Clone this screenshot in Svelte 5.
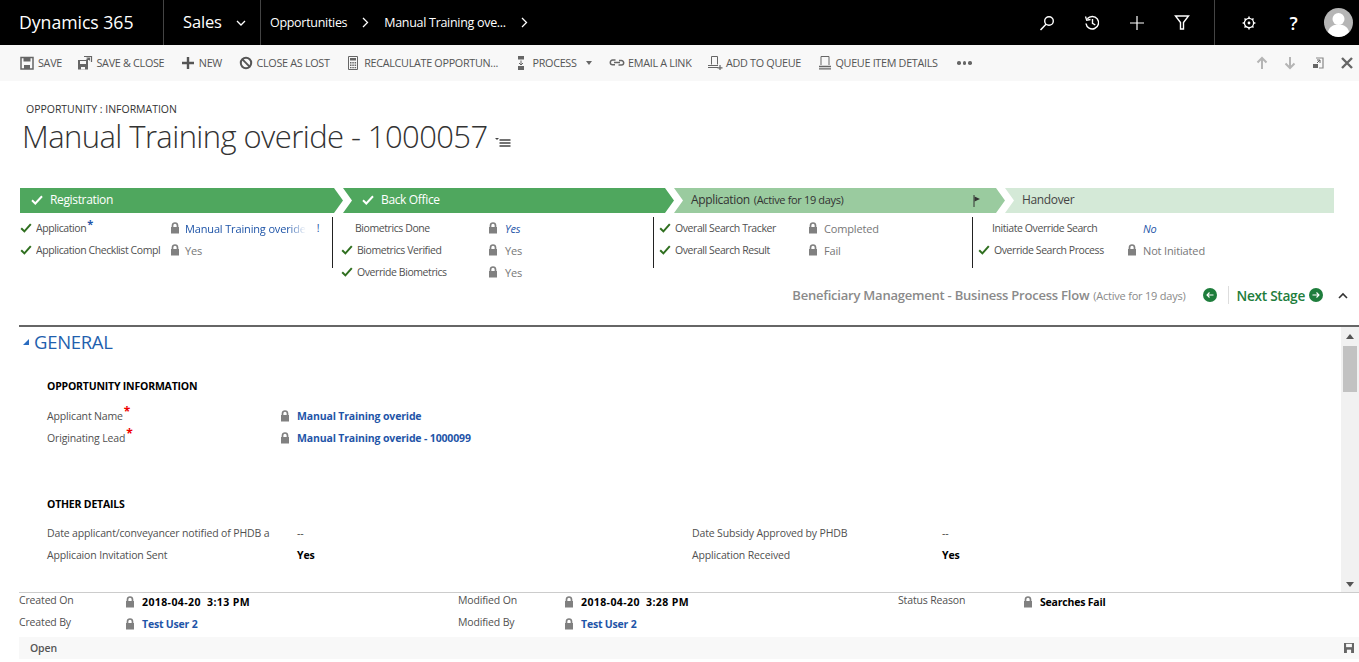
<script>
  const commands = [
    { label: 'SAVE', icon: 'save' },
    { label: 'SAVE & CLOSE', icon: 'saveclose' },
    { label: 'NEW', icon: 'plus' },
    { label: 'CLOSE AS LOST', icon: 'ban' },
    { label: 'RECALCULATE OPPORTUN...', icon: 'calc' },
    { label: 'PROCESS', icon: 'process', caret: true },
    { label: 'EMAIL A LINK', icon: 'link' },
    { label: 'ADD TO QUEUE', icon: 'addqueue' },
    { label: 'QUEUE ITEM DETAILS', icon: 'queue' }
  ];

  const stages = [
    { name: 'Registration', state: 'done' },
    { name: 'Back Office', state: 'done' },
    { name: 'Application', state: 'active', note: '(Active for 19 days)' },
    { name: 'Handover', state: 'todo' }
  ];

  const stageFields = [
    [
      { label: 'Application', req: true, check: true, lock: true, value: 'Manual Training overide', link: true, fade: true },
      { label: 'Application Checklist Compl', check: true, lock: true, value: 'Yes' }
    ],
    [
      { label: 'Biometrics Done', lock: true, value: 'Yes', em: true },
      { label: 'Biometrics Verified', check: true, lock: true, value: 'Yes' },
      { label: 'Override Biometrics', check: true, lock: true, value: 'Yes' }
    ],
    [
      { label: 'Overall Search Tracker', check: true, lock: true, value: 'Completed' },
      { label: 'Overall Search Result', check: true, lock: true, value: 'Fail' }
    ],
    [
      { label: 'Initiate Override Search', value: 'No', em: true },
      { label: 'Override Search Process', check: true, lock: true, value: 'Not Initiated' }
    ]
  ];

  const footer = [
    [
      { label: 'Created On', value: '2018-04-20  3:13 PM', date: true },
      { label: 'Created By', value: 'Test User 2', link: true }
    ],
    [
      { label: 'Modified On', value: '2018-04-20  3:28 PM', date: true },
      { label: 'Modified By', value: 'Test User 2', link: true }
    ],
    [{ label: 'Status Reason', value: 'Searches Fail' }]
  ];
</script>

{#snippet lock()}
  <svg class="lock" viewBox="0 0 10 12" width="10" height="12">
    <path d="M2.500 5.500V3.500C2.500 2 3.500 1 5 1s2.500 1 2.500 2.500v2" fill="none" stroke="#808080" stroke-width="1.700" />
    <rect x="1" y="5" width="8" height="6.500" fill="#808080" />
  </svg>
{/snippet}

{#snippet check()}
  <svg class="check" viewBox="0 0 12 10" width="12" height="10">
    <path d="M1.200 5.200 4.400 8.400 10.800 1.200" fill="none" stroke="#2f6f1f" stroke-width="2" />
  </svg>
{/snippet}

{#snippet cmdIcon(name)}
  <svg class="cmd-icon" viewBox="0 0 16 16" width="16" height="16">
    {#if name === 'save'}
      <path d="M2 2.500h12v11.500H2z" fill="none" stroke="#666" stroke-width="1.500" />
      <path d="M4.500 2.500h7v4h-7zM5 10h6v4H5z" fill="#666" />
    {:else if name === 'saveclose'}
      <path d="M1 5h10v9.500H1z" fill="#666" />
      <path d="M3 6h6v3H3zM4 12h4v2.500H4z" fill="#f8f8f8" />
      <path d="M7 1.500h7.500V7" fill="none" stroke="#666" stroke-width="1.200" />
      <path d="M12.500 3 9 5.500M9.500 3h3v2.500" fill="none" stroke="#666" stroke-width="1.100" />
    {:else if name === 'plus'}
      <path d="M8 2v12M2 8h12" stroke="#555" stroke-width="2.400" />
    {:else if name === 'ban'}
      <circle cx="8" cy="8" r="5.200" fill="none" stroke="#555" stroke-width="2" />
      <path d="M4.400 4.400l7.200 7.200" stroke="#555" stroke-width="2" />
    {:else if name === 'calc'}
      <path d="M3.500 1.500h9v13h-9z" fill="none" stroke="#666" />
      <path d="M5 3h6v2.500H5zM5 7h1.500v1.500H5zM7.300 7h1.500v1.500H7.300zM9.600 7h1.500v1.500H9.600zM5 9.500h1.500V11H5zM7.300 9.500h1.500V11H7.300zM9.600 9.500h1.500V11H9.600zM5 12h1.500v1.300H5zM7.300 12h1.500v1.300H7.300zM9.600 12h1.500v1.300H9.600z" fill="#666" />
    {:else if name === 'process'}
      <path d="M5 1h6v3.500H5zM5 11h6v4H5z" fill="#666" />
      <path d="M8 5.500V10M6 8l2 2 2-2" fill="none" stroke="#666" />
    {:else if name === 'link'}
      <path d="M6.500 5.500H3.600a2.300 2.300 0 0 0 0 4.600h2.400M9.500 10.500h2.900a2.300 2.300 0 0 0 0-4.600H10M5 8h6" transform="translate(0 -.4)" fill="none" stroke="#666" stroke-width="1.500" />
    {:else if name === 'addqueue'}
      <path d="M4.500 9.500V1.500h6v8" fill="none" stroke="#666" />
      <path d="M1 10.500h10M1 12.500h10" stroke="#666" stroke-width="1.200" />
      <path d="M13 10v5M10.500 12.800h5" stroke="#666" stroke-width="1.200" />
    {:else if name === 'queue'}
      <path d="M4 10V1.500h8V10" fill="none" stroke="#666" />
      <path d="M2 11.500h12M2 13.800h12" stroke="#666" stroke-width="1.300" />
    {/if}
  </svg>
{/snippet}

<div class="page">
  <header class="topbar">
    <div class="brand">Dynamics 365</div>
    <div class="app">
      <span>Sales</span>
      <svg viewBox="0 0 10 6" width="10" height="6"><path d="M1 1l4 4 4-4" fill="none" stroke="#fff" stroke-width="1.300" /></svg>
    </div>
    <nav class="crumbs">
      <span class="crumb-first">Opportunities</span>
      <svg viewBox="0 0 7 11" width="7" height="11"><path d="M1 1l4.500 4.500L1 10" fill="none" stroke="#fff" stroke-width="1.300" /></svg>
      <span class="crumb-second">Manual Training ove...</span>
      <svg viewBox="0 0 7 11" width="7" height="11"><path d="M1 1l4.500 4.500L1 10" fill="none" stroke="#fff" stroke-width="1.300" /></svg>
    </nav>
    <div class="tools">
      <button aria-label="Search">
        <svg viewBox="0 0 16 16" width="16" height="16"><circle cx="10" cy="6" r="4.300" fill="none" stroke="#fff" stroke-width="1.400" /><path d="M7 9.300 1.500 15" stroke="#fff" stroke-width="1.500" /></svg>
      </button>
      <button aria-label="Recent">
        <svg viewBox="0 0 16 16" width="16" height="16"><path d="M3.300 3.800A6.300 6.300 0 1 1 2 8.500" fill="none" stroke="#fff" stroke-width="1.500" /><path d="M1.500 1.500 2.700 5.200l3.800-.7" fill="none" stroke="#fff" stroke-width="1.300" /><path d="M8.500 4v4.300l2.800 1.700" fill="none" stroke="#fff" stroke-width="1.400" /></svg>
      </button>
      <button aria-label="Create">
        <svg viewBox="0 0 14 14" width="14" height="14"><path d="M7 0v14M0 7h14" stroke="#fff" stroke-width="1.200" /></svg>
      </button>
      <button aria-label="Filter">
        <svg viewBox="0 0 16 15" width="16" height="15"><path d="M1.500 1h13L9.500 7.500V14h-3V7.500z" fill="none" stroke="#fff" stroke-width="1.400" /></svg>
      </button>
      <span class="tool-sep"></span>
      <button aria-label="Settings">
        <svg viewBox="0 0 14 14" width="14" height="14"><circle cx="7" cy="7" r="4.600" fill="none" stroke="#fff" stroke-width="1.300" /><circle cx="7" cy="7" r="1.400" fill="#fff" /><path d="M7 .6v1.800M7 11.600v1.800M.6 7h1.800M11.600 7h1.800M2.500 2.500l1.300 1.300M10.200 10.200l1.300 1.300M2.500 11.500l1.300-1.300M10.200 3.800l1.300-1.300" stroke="#fff" stroke-width="1.500" /></svg>
      </button>
      <button class="help" aria-label="Help">?</button>
      <div class="avatar">
        <svg viewBox="0 0 29 29" width="29" height="29"><circle cx="14.500" cy="14.500" r="14.500" fill="#b5b5b5" /><circle cx="14.500" cy="11" r="6" fill="#fff" /><path d="M4 24c1-5 5-7.500 10.500-7.500S24 19 25 24a14.500 14.500 0 0 1-10.500 5A14.500 14.500 0 0 1 4 24z" fill="#fff" /></svg>
      </div>
    </div>
  </header>

  <div class="commands">
    <div class="cmd-list">
      {#each commands as c}
        <div class="cmd">
          {@render cmdIcon(c.icon)}
          <span>{c.label}</span>
          {#if c.caret}<i class="caret"></i>{/if}
        </div>
      {/each}
      <div class="more"><b></b><b></b><b></b></div>
    </div>
    <div class="cmd-nav">
      <svg viewBox="0 0 12 14" width="12" height="14"><path d="M6 13V2M1.500 6.500 6 2l4.500 4.500" fill="none" stroke="#b5b5b5" stroke-width="2" /></svg>
      <svg viewBox="0 0 12 14" width="12" height="14"><path d="M6 1v11M1.500 7.500 6 12l4.500-4.500" fill="none" stroke="#b5b5b5" stroke-width="2" /></svg>
      <svg viewBox="0 0 12 12" width="12" height="12"><path d="M4 1h7v10H7" fill="none" stroke="#888" stroke-width="1.200" /><path d="M1 7h5v4H1z" fill="#666" /><path d="M5 6l3-3M5 3h3v3" fill="none" stroke="#666" /></svg>
      <svg class="close" viewBox="0 0 12 12" width="12" height="12"><path d="M1 1l10 10M11 1 1 11" stroke="#666" stroke-width="2.400" /></svg>
    </div>
  </div>

  <section class="title">
    <div class="entity">OPPORTUNITY : INFORMATION</div>
    <h1>
      Manual Training overide - 1000057
      <svg viewBox="0 0 16 10" width="16" height="10"><path d="M4.500 3h11M4.500 6h11M4.500 9h11" stroke="#444" stroke-width="1.300" /><path d="M0 1h4L2 3z" fill="#444" /></svg>
    </h1>
  </section>

  <div class="stages">
    {#each stages as s}
      <div class="stage {s.state}">
        {#if s.state === 'done'}
          <svg viewBox="0 0 12 10" width="12" height="10"><path d="M1 5.200 4.300 8.500 11 1.200" fill="none" stroke="#fff" stroke-width="2" /></svg>
        {/if}
        <span class="stage-name">{s.name}</span>
        {#if s.note}<span class="stage-note">{s.note}</span>{/if}
        {#if s.state === 'active'}
          <svg class="flag" viewBox="0 0 8 12" width="8" height="12"><path d="M1 0v12" stroke="#333" /><path d="M1.500 1.500 7 4 1.500 6.500z" fill="#333" /></svg>
        {/if}
      </div>
    {/each}
  </div>

  <div class="stage-fields">
    {#each stageFields as col, i}
      <div class="sf-col sf-col-{i}">
        {#each col as f}
          <div class="sf-row" class:nocheck={!f.check}>
            <span class="sf-check">{#if f.check}{@render check()}{/if}</span>
            <span class="sf-label">{f.label}{#if f.req}<sup class="req-blue">*</sup>{/if}</span>
            <span class="sf-lock">{#if f.lock}{@render lock()}{/if}</span>
            <span class="sf-value" class:link={f.link} class:em={f.em} class:fade={f.fade}>{f.value}</span>
            {#if f.fade}<span class="bang">!</span>{/if}
          </div>
        {/each}
      </div>
    {/each}
  </div>

  <div class="bpf">
    <span class="bpf-name">Beneficiary Management - Business Process Flow</span>
    <span class="bpf-note">(Active for 19 days)</span>
    <svg class="round" viewBox="0 0 14 14" width="14" height="14"><circle cx="7" cy="7" r="7" fill="#1e7d3c" /><path d="M10.500 7H4M6.500 4.500 4 7l2.500 2.500" fill="none" stroke="#fff" stroke-width="1.100" /></svg>
    <span class="bpf-sep"></span>
    <span class="next">Next Stage</span>
    <svg class="round" viewBox="0 0 14 14" width="14" height="14"><circle cx="7" cy="7" r="7" fill="#1e7d3c" /><path d="M3.500 7H10M7.500 4.500 10 7 7.500 9.500" fill="none" stroke="#fff" stroke-width="1.100" /></svg>
    <svg class="collapse" viewBox="0 0 10 7" width="10" height="7"><path d="M1 6l4-4 4 4" fill="none" stroke="#333" stroke-width="1.600" /></svg>
  </div>

  <main class="form">
    <div class="form-body">
      <div class="tab-head">
        <i class="tab-tri"></i>
        <h2>GENERAL</h2>
      </div>

      <h3 class="sec-info">OPPORTUNITY INFORMATION</h3>
      <div class="row">
        <span class="lbl">Applicant Name<sup class="req">*</sup></span>
        {@render lock()}
        <span class="val link">Manual Training overide</span>
      </div>
      <div class="row">
        <span class="lbl">Originating Lead<sup class="req">*</sup></span>
        {@render lock()}
        <span class="val link">Manual Training overide - 1000099</span>
      </div>

      <h3 class="sec-other">OTHER DETAILS</h3>
      <div class="two">
        <div class="pair">
          <span class="lbl clip">Date applicant/conveyancer notified of PHDB a</span>
          <span class="val plain">--</span>
        </div>
        <div class="pair">
          <span class="lbl">Date Subsidy Approved by PHDB</span>
          <span class="val plain">--</span>
        </div>
        <div class="pair">
          <span class="lbl">Applicaion Invitation Sent</span>
          <span class="val">Yes</span>
        </div>
        <div class="pair">
          <span class="lbl">Application Received</span>
          <span class="val">Yes</span>
        </div>
      </div>
    </div>
    <div class="scrollbar">
      <i class="up"></i>
      <div class="track"><div class="thumb"></div></div>
      <i class="down"></i>
    </div>
  </main>

  <footer class="summary">
    {#each footer as col, i}
      <div class="sum-col sum-col-{i}">
        {#each col as f}
          <div class="sum-row">
            <span class="sum-label">{f.label}</span>
            {@render lock()}
            <span class="sum-value" class:link={f.link} class:date={f.date}>{f.value}</span>
          </div>
        {/each}
      </div>
    {/each}
  </footer>

  <div class="status">
    <span>Open</span>
    <svg viewBox="0 0 12 12" width="10" height="10"><path d="M0 0h12v12H0z" fill="#666" /><path d="M2.500 1h7v4h-7z" fill="#f8f8f8" /><path d="M3.500 8h5v4h-5z" fill="#f8f8f8" /></svg>
  </div>
</div>

<style>
  :global(body) {
    margin: 0;
    background: #fff;
    font-family: "Open Sans", "Liberation Sans", sans-serif;
    overflow: hidden;
  }

  .page {
    width: 1359px;
    height: 662px;
    overflow: hidden;
    color: #444;
    font-size: 11px;
    letter-spacing: -0.15px;
  }

  /* top nav */
  .topbar {
    display: flex;
    align-items: center;
    height: 45px;
    background: #000;
    color: #fff;
  }

  .brand {
    width: 144px;
    height: 45px;
    line-height: 44px;
    padding-left: 19px;
    font-size: 17.700px;
    letter-spacing: -0.05px;
    border-right: 1px solid #444;
    box-sizing: content-box;
  }

  .app {
    display: flex;
    align-items: center;
    gap: 14px;
    width: 77px;
    height: 45px;
    padding-left: 19px;
    font-size: 16.500px;
    letter-spacing: -0.15px;
    border-right: 1px solid #444;
  }

  .app span {
    margin-bottom: 3px;
  }

  .crumbs {
    display: flex;
    align-items: center;
    font-size: 12.500px;
    letter-spacing: -0.3px;
    padding-left: 9px;
  }

  .crumb-first {
    margin-right: 15px;
  }

  .crumb-second {
    margin: 0 15px;
  }

  .tools {
    display: flex;
    align-items: center;
    margin-left: auto;
    height: 45px;
    padding-right: 6px;
  }

  .tools button {
    display: flex;
    align-items: center;
    justify-content: center;
    width: 45px;
    height: 45px;
    padding: 0;
    border: 0;
    background: none;
    color: #fff;
    font: inherit;
  }

  .tool-sep {
    width: 1px;
    height: 45px;
    background: #444;
    margin: 0 11px 0 10px;
  }

  .tools .help {
    font-size: 18px;
    font-weight: 600;
  }

  .avatar {
    display: flex;
    margin-left: 8px;
  }

  /* command bar */
  .commands {
    display: flex;
    align-items: center;
    justify-content: space-between;
    height: 36px;
    background: #f8f8f8;
    padding: 0 6px 0 19px;
  }

  .cmd-list {
    display: flex;
    align-items: center;
    gap: 15.500px;
  }

  .cmd {
    display: flex;
    align-items: center;
    gap: 3px;
    font-size: 10.800px;
    letter-spacing: -0.3px;
    color: #555;
    white-space: nowrap;
  }

  .cmd span {
    margin-top: -2px;
  }

  .caret {
    width: 0;
    height: 0;
    margin: 0 2px 0 6px;
    border: 3px solid transparent;
    border-top: 4px solid #666;
    border-bottom: 0;
  }

  .more {
    display: flex;
    gap: 2px;
    margin-left: 4px;
  }

  .more b {
    width: 3.500px;
    height: 3.500px;
    border-radius: 50%;
    background: #666;
  }

  .cmd-nav {
    display: flex;
    align-items: center;
    gap: 16px;
  }

  .close {
    margin-left: 1px;
  }

  /* title */
  .title {
    height: 107px;
    padding: 22px 0 0 22px;
    box-sizing: border-box;
  }

  .entity {
    padding-left: 4px;
    font-size: 10.500px;
    line-height: 13px;
    letter-spacing: -0.02px;
    color: #333;
  }

  h1 {
    margin: 0;
    font-size: 31px;
    line-height: 40px;
    font-weight: 300;
    letter-spacing: -0.58px;
    color: #333;
    white-space: nowrap;
  }

  h1 svg {
    vertical-align: 1px;
  }

  /* stage chevrons */
  .stages {
    display: flex;
    height: 25px;
    margin: 0 25px 0 20px;
  }

  .stage {
    display: flex;
    align-items: center;
    gap: 7px;
    flex: 0 0 331px;
    padding: 0 0 2px 19px;
    box-sizing: border-box;
    font-size: 12px;
    letter-spacing: -0.35px;
    clip-path: polygon(0 0, calc(100% - 9px) 0, 100% 50%, calc(100% - 9px) 100%, 0 100%, 9px 50%);
  }

  .stage:first-child {
    flex-basis: 323px;
    padding-left: 11px;
    clip-path: polygon(0 0, calc(100% - 9px) 0, 100% 50%, calc(100% - 9px) 100%, 0 100%);
  }

  .stage:last-child {
    flex-basis: 329px;
    padding-left: 17px;
    clip-path: polygon(0 0, 100% 0, 100% 100%, 0 100%, 9px 50%);
  }

  .stage.done {
    background: #4fa75e;
    color: #fff;
  }

  .stage.active {
    position: relative;
    padding-left: 17px;
    background: #9acb9f;
    color: #333;
    gap: 4px;
  }

  .stage.todo {
    background: #d4e9d7;
    color: #444;
  }

  .stage-note {
    font-size: 11px;
  }

  .flag {
    position: absolute;
    right: 24px;
    top: 7px;
  }

  /* stage fields */
  .stage-fields {
    display: flex;
    height: 68px;
    padding: 4px 0 0 20px;
    box-sizing: border-box;
  }

  .sf-col {
    position: relative;
    flex: 0 0 321px;
    height: 51px;
    box-sizing: border-box;
    border-left: 1px solid #222;
    padding-left: 8px;
  }

  .sf-col-0 {
    flex-basis: 312px;
    border-left: 0;
    padding-left: 0;
  }

  .sf-col-2 {
    flex-basis: 319px;
    padding-left: 5px;
  }

  .sf-col-3 {
    padding-left: 5px;
  }

  .sf-row {
    display: flex;
    align-items: center;
    height: 22px;
    font-size: 10.500px;
    white-space: nowrap;
  }

  .sf-check {
    flex: 0 0 16px;
    display: flex;
  }

  .nocheck .sf-check {
    flex-basis: 14px;
  }

  .nocheck .sf-label {
    margin-right: 2px;
  }

  .sf-label {
    flex: 0 0 131px;
    overflow: hidden;
    padding-top: 2px;
    margin-top: -2px;
    color: #505050;
    letter-spacing: -0.42px;
  }

  .sf-col-0 .sf-label {
    flex-basis: 134px;
  }

  .sf-col-2 .sf-label,
  .sf-col-3 .sf-label {
    flex-basis: 133px;
  }

  .sf-lock {
    flex: 0 0 17px;
    display: flex;
  }

  .sf-col-0 .sf-lock {
    flex-basis: 15px;
  }

  .sf-col-2 .sf-lock,
  .sf-col-3 .sf-lock {
    flex-basis: 16px;
  }

  .sf-value {
    color: #777;
    font-size: 11px;
  }

  .sf-value.link {
    color: #1f55a8;
  }

  .sf-value.em {
    color: #1f55a8;
    font-style: italic;
  }

  .sf-value.fade {
    flex: 0 0 120px;
    -webkit-mask-image: linear-gradient(90deg, #000 85%, transparent);
    mask-image: linear-gradient(90deg, #000 85%, transparent);
  }

  .bang {
    margin-left: 11px;
    color: #1f55a8;
  }

  .req-blue {
    color: #1f55a8;
    font-size: 11px;
    font-weight: 700;
    line-height: 0;
    margin-left: 1px;
  }

  /* process flow */
  .bpf {
    display: flex;
    align-items: center;
    justify-content: flex-end;
    height: 32px;
    padding-right: 11px;
    box-sizing: border-box;
    margin-top: -2px;
  }

  .bpf-name {
    font-size: 13px;
    font-weight: 600;
    color: #8a8a8a;
    letter-spacing: -0.22px;
  }

  .bpf-note {
    margin-left: 4px;
    font-size: 11px;
    color: #8a8a8a;
    letter-spacing: -0.22px;
  }

  .bpf-sep {
    width: 1px;
    height: 18px;
    background: #ddd;
    margin: 0 8px 0 11px;
  }

  .round:first-of-type {
    margin-left: 17px;
  }

  .next {
    font-size: 13.700px;
    font-weight: 600;
    color: #1e7d3c;
    letter-spacing: -0.3px;
    margin-right: 4px;
  }

  .collapse {
    margin-left: 15px;
  }

  /* form */
  .form {
    display: flex;
    height: 267px;
    margin: 14px 0 0 19px;
    border-top: 2px solid #666;
    box-sizing: border-box;
  }

  .form-body {
    flex: 1;
    min-width: 0;
    overflow: hidden;
  }

  .tab-head {
    display: flex;
    align-items: center;
    height: 28px;
    padding-left: 4px;
  }

  .tab-tri {
    width: 0;
    height: 0;
    margin: 2px 5px 0 0;
    border-left: 6px solid transparent;
    border-bottom: 6px solid #2a6cc0;
  }

  h2 {
    margin: 0;
    font-size: 18.500px;
    font-weight: 400;
    letter-spacing: -0.3px;
    color: #1f5fae;
  }

  h3 {
    margin: 0;
    padding-left: 28px;
    font-size: 10.500px;
    font-weight: 700;
    line-height: 14px;
    letter-spacing: -0.2px;
    color: #000;
  }

  .sec-info {
    margin: 24px 0 12px;
  }

  .sec-other {
    margin: 48px 0 11px;
  }

  .row {
    display: flex;
    align-items: center;
    height: 22px;
    padding-left: 28px;
  }

  .row :global(.lock) {
    margin-right: 7px;
  }

  .lbl {
    flex: 0 0 233px;
    color: #505050;
    font-size: 10.500px;
    letter-spacing: -0.15px;
    white-space: nowrap;
  }

  .req {
    color: #e00;
    font-size: 12px;
    font-weight: 700;
    line-height: 0;
    margin-left: 1px;
  }

  .val {
    font-size: 10.500px;
    font-weight: 700;
    letter-spacing: -0.15px;
    color: #000;
    white-space: nowrap;
  }

  .val.link {
    color: #1f55a8;
  }

  .val.plain {
    font-weight: 400;
    color: #444;
  }

  .two {
    display: grid;
    grid-template-columns: 645px 1fr;
    padding-left: 28px;
  }

  .pair {
    display: flex;
    align-items: center;
    height: 22px;
  }

  .pair .lbl {
    flex-basis: 250px;
  }

  .pair .lbl.clip {
    flex-basis: 225px;
    overflow: hidden;
    margin-right: 25px;
  }

  .scrollbar {
    flex: 0 0 18px;
    display: flex;
    flex-direction: column;
    align-items: center;
    background: #f1f1f1;
  }

  .track {
    flex: 1;
    width: 100%;
    padding-top: 1px;
  }

  .thumb {
    width: 14px;
    height: 46px;
    margin: 0 auto;
    background: #c2c2c2;
  }

  .up,
  .down {
    width: 0;
    height: 0;
    border: 4px solid transparent;
  }

  .up {
    margin: 7px 0 6px;
    border-top: 0;
    border-bottom: 5px solid #555;
  }

  .down {
    margin: 6px 0 5px;
    border-bottom: 0;
    border-top: 5px solid #555;
  }

  /* summary footer */
  .summary {
    display: flex;
    height: 45px;
    margin: 0 0 0 19px;
    border-top: 1px solid #ccc;
    box-sizing: border-box;
  }

  .sum-col {
    flex: 0 0 439px;
    margin-top: -2px;
  }

  .sum-col-1 {
    flex-basis: 440px;
  }

  .sum-row {
    display: flex;
    align-items: center;
    height: 22px;
  }

  .sum-row :global(.lock) {
    margin-right: 7px;
  }

  .sum-label {
    flex: 0 0 106px;
    font-size: 10.500px;
    color: #505050;
    margin-top: -4px;
  }

  .sum-col-2 .sum-label {
    flex-basis: 125px;
  }

  .sum-value {
    font-size: 10.500px;
    font-weight: 700;
    white-space: pre;
    color: #000;
    letter-spacing: -0.2px;
  }

  .sum-value.date {
    letter-spacing: 0.4px;
  }

  .sum-value.link {
    color: #1f55a8;
  }

  /* status bar */
  .status {
    display: flex;
    align-items: center;
    justify-content: space-between;
    height: 22px;
    margin-left: 19px;
    padding: 0 5px 0 11px;
    background: #f8f8f8;
    font-size: 10.500px;
    font-weight: 600;
    color: #555;
  }
</style>
